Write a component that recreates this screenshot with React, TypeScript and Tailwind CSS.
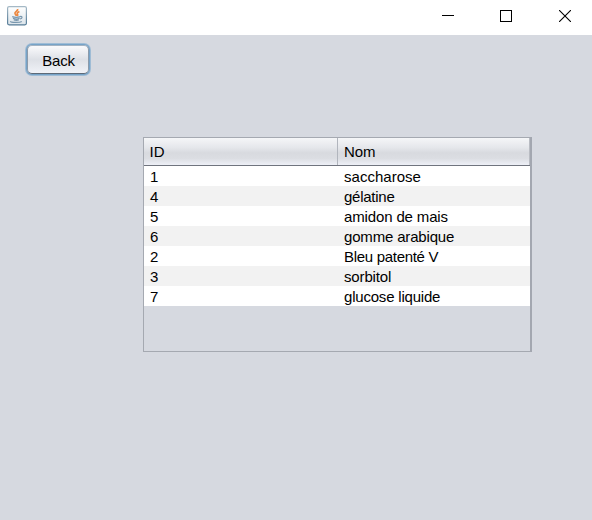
const rows = [
  { id: '1', name: 'saccharose', tracking: 'tracking-[0.02px]' },
  { id: '4', name: 'gélatine', tracking: 'tracking-[-0.25px]' },
  { id: '5', name: 'amidon de mais', tracking: 'tracking-[-0.14px]' },
  { id: '6', name: 'gomme arabique', tracking: 'tracking-[-0.17px]' },
  { id: '2', name: 'Bleu patenté V', tracking: 'tracking-[-0.3px]' },
  { id: '3', name: 'sorbitol', tracking: 'tracking-[-0.15px]' },
  { id: '7', name: 'glucose liquide', tracking: 'tracking-[-0.2px]' },
];

function JavaIcon() {
  return (
    <svg width="20" height="20" viewBox="0 0 20 20" fill="none">
      <defs>
        <linearGradient id="frame" x1="0" y1="0" x2="0" y2="1">
          <stop stopColor="#a5b9c6" />
          <stop offset="1" stopColor="#537a96" />
        </linearGradient>
        <linearGradient id="face" x1="0" y1="0" x2="0" y2="1">
          <stop stopColor="#ffffff" />
          <stop offset="1" stopColor="#dce4ea" />
        </linearGradient>
      </defs>
      <rect x="0.6" y="0.6" width="18.8" height="18.2" rx="1.5" fill="url(#face)" stroke="url(#frame)" strokeWidth="1.2" />
      <path d="M10.6 3c.8 2-3.2 2.8-2.6 4.6.2.8 1.2 1.2 1.4 2.2M12.4 5.4C9.8 6.6 10 7.6 10.6 8.4c.4.6.2 1-.4 1.6" stroke="#ec8840" strokeWidth="1.7" />
      <path d="M5.2 10.6c2 .7 6 .7 8 0M6 12.4c2 .7 5 .7 6.6 0M6.8 14c1.6.5 3.6.5 5 0M13 10.6c2.6-.8 2.8 1.6 0 2.4M3.6 15.2c-.8 1.4 9 1.8 11.2.2" stroke="#7896ad" strokeWidth="1.2" />
    </svg>
  );
}

export default function App() {
  return (
    <div className="flex h-[520px] w-[592px] flex-col overflow-hidden bg-[#d6d9e0] font-['Liberation_Sans',Arial,sans-serif] text-[15px] leading-5 text-black">
      <header className="flex h-[35px] shrink-0 justify-between bg-white">
        <div className="pl-[7px] pt-[6px]"><JavaIcon /></div>
        <div className="flex pr-[21px] pt-[10px]">
          <svg width="12" height="12" shapeRendering="crispEdges"><path d="M0 5.5h12" stroke="#000" /></svg>
          <svg className="ml-[46px]" width="12" height="12" shapeRendering="crispEdges"><path d="M.5.5h11v11H.5z" fill="none" stroke="#000" /></svg>
          <svg className="ml-[47px]" width="12" height="12"><path d="M0 0l12 12M12 0L0 12" stroke="#000" strokeWidth="1.1" /></svg>
        </div>
      </header>
      <main>
        <button className="ml-[27px] mt-[10px] flex h-[29px] w-[62px] items-center justify-center rounded-[5px] border border-x-[#8b9aaa] border-b-[#5d6a78] border-t-[#a3b3c3] bg-linear-to-b from-[#fafafc] via-[#dde0e6] to-[#f0f2f7] pl-[1px] pt-[3px] tracking-[-0.2px] shadow-[0_0_0_1px_#76a3c8,0_0_0_2px_#9fbcd5]">
          Back
        </button>
        <div className="ml-[143px] mt-[63px] h-[215px] w-[389px] border-y border-l border-r-2 border-y-[#a5a9b1] border-l-[#a5a9b1] border-r-[#a3a7b0]">
          <div className="grid h-[28px] grid-cols-[194px_192px] border-b border-[#70747e] bg-[linear-gradient(to_bottom,#f5f6f8_0%,#e5e7eb_35%,#d8dadf_55%,#dbdde2_75%,#eef0f7_100%)]">
            <div className="border-r border-[#b1b5bd] pl-[5.5px] pt-[4px]">ID</div>
            <div className="border-r border-[#b8bbc2] pl-[6px] pt-[4px] tracking-[-0.1px]">Nom</div>
          </div>
          <div>
            {rows.map((row) => (
              <div key={row.id} className="grid h-5 grid-cols-[194px_192px] odd:bg-white even:bg-[#f2f2f2]">
                <span className="pl-[6px] pt-px">{row.id}</span>
                <span className={`whitespace-nowrap pl-[6px] pt-px ${row.tracking}`}>{row.name}</span>
              </div>
            ))}
          </div>
        </div>
      </main>
    </div>
  );
}
